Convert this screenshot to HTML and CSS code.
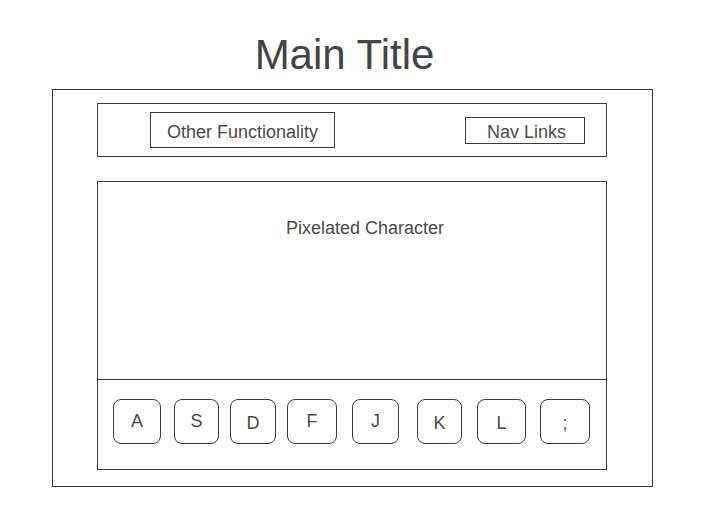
FILE: index.html
```html
<!DOCTYPE html>
<html lang="en">
<head>
<meta charset="utf-8">
<title>Main Title</title>
<link rel="stylesheet" href="styles.css">
</head>
<body>
  <h1 class="title">Main Title</h1>
  <div class="frame">
    <header class="topbar">
      <div class="other">Other Functionality</div>
      <nav class="nav">Nav Links</nav>
    </header>
    <section class="game">
      <div class="screen">
        <p class="character">Pixelated Character</p>
      </div>
      <div class="keys">
        <div class="key k-a">A</div>
        <div class="key k-s">S</div>
        <div class="key k-d low">D</div>
        <div class="key k-f">F</div>
        <div class="key k-j">J</div>
        <div class="key k-k low">K</div>
        <div class="key k-l low">L</div>
        <div class="key k-semi low">;</div>
      </div>
    </section>
  </div>
</body>
</html>
```

FILE: styles.css
```css
* {
  box-sizing: border-box;
}

html, body {
  margin: 0;
  padding: 0;
  background: #ffffff;
}

body {
  font-family: "Liberation Sans", Arial, sans-serif;
  color: #444444;
}

.title {
  margin: 31px 0 10px;
  padding-right: 32px;
  font-size: 42px;
  line-height: 48px;
  font-weight: normal;
  text-align: center;
  color: #444444;
}

.frame {
  width: 601px;
  margin-left: 52px;
  border: 1px solid #3c3c3c;
  padding: 13px 45px 16px 44px;
}

.topbar {
  height: 54px;
  border: 1px solid #3c3c3c;
  display: flex;
  align-items: center;
  justify-content: space-between;
  padding: 0 21px 0 52px;
}

.other {
  border: 1px solid #3c3c3c;
  font-size: 18px;
  line-height: 20px;
  padding: 9px 16px 5px;
  white-space: nowrap;
  color: #4a4a4a;
}

.nav {
  width: 120px;
  height: 27px;
  border: 1px solid #3c3c3c;
  font-size: 18px;
  line-height: 20px;
  padding: 4px 0 1px 21px;
  white-space: nowrap;
  margin-top: 1px;
  color: #4a4a4a;
}

.game {
  margin-top: 24px;
  border: 1px solid #3c3c3c;
}

.screen {
  height: 198px;
  border-bottom: 1px solid #3c3c3c;
  padding: 36px 0 0 26px;
}

.character {
  margin: 0;
  font-size: 18px;
  line-height: 20px;
  text-align: center;
  color: #4a4a4a;
}

.keys {
  height: 89px;
  display: flex;
  align-items: flex-start;
  padding-top: 19px;
}

.key {
  height: 45px;
  border: 1px solid #3c3c3c;
  border-radius: 8px;
  font-size: 18px;
  line-height: 20px;
  padding-top: 11px;
  text-align: center;
  color: #4a4a4a;
}

.key.low {
  padding-top: 13px;
}

.k-a { width: 48px; margin-left: 15px; }
.k-s { width: 45px; margin-left: 13px; }
.k-d { width: 46px; margin-left: 11px; }
.k-f { width: 50px; margin-left: 11px; }
.k-j { width: 47px; margin-left: 15px; }
.k-k { width: 45px; margin-left: 18px; }
.k-l { width: 49px; margin-left: 15px; }
.k-semi { width: 50px; margin-left: 14px; }
```
